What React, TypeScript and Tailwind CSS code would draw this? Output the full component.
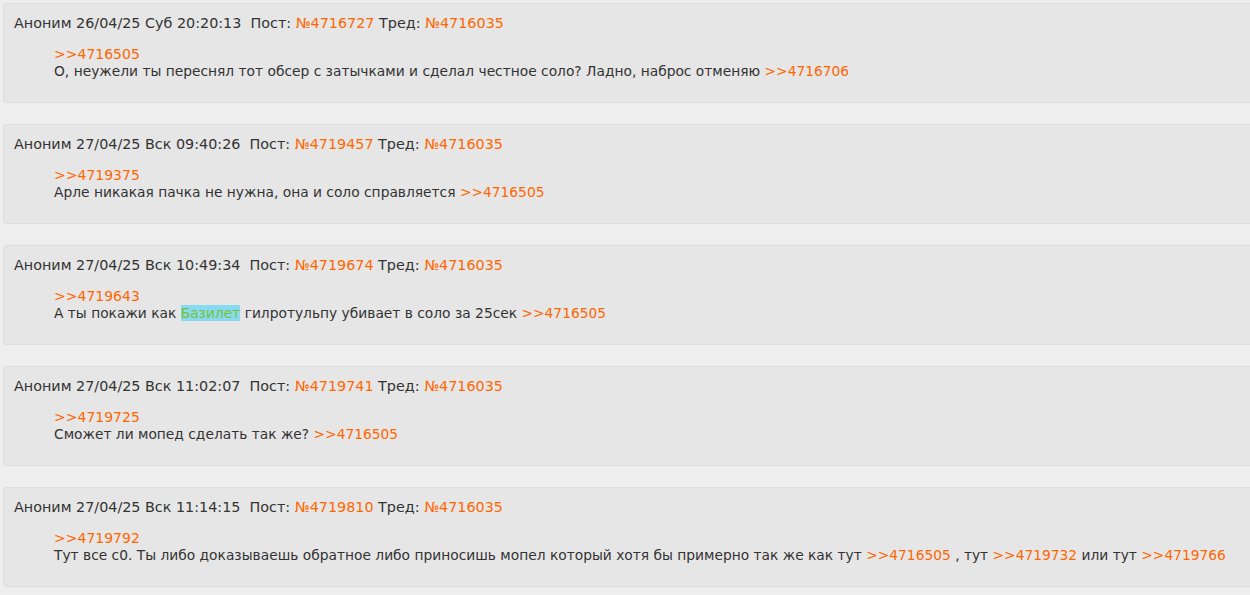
import React from "react";

type Part = { t: string; k?: "link" | "hl" };

const posts: { date: string; num: string; reply: string; body: Part[] }[] = [
  {
    date: "26/04/25 Суб 20:20:13",
    num: "4716727",
    reply: "4716505",
    body: [
      { t: "О, неужели ты переснял тот обсер с затычками и сделал честное соло? Ладно, наброс отменяю " },
      { t: ">>4716706", k: "link" },
    ],
  },
  {
    date: "27/04/25 Вск 09:40:26",
    num: "4719457",
    reply: "4719375",
    body: [
      { t: "Арле никакая пачка не нужна, она и соло справляется " },
      { t: ">>4716505", k: "link" },
    ],
  },
  {
    date: "27/04/25 Вск 10:49:34",
    num: "4719674",
    reply: "4719643",
    body: [
      { t: "А ты покажи как " },
      { t: "Базилет", k: "hl" },
      { t: " гилротульпу убивает в соло за 25сек " },
      { t: ">>4716505", k: "link" },
    ],
  },
  {
    date: "27/04/25 Вск 11:02:07",
    num: "4719741",
    reply: "4719725",
    body: [
      { t: "Сможет ли мопед сделать так же? " },
      { t: ">>4716505", k: "link" },
    ],
  },
  {
    date: "27/04/25 Вск 11:14:15",
    num: "4719810",
    reply: "4719792",
    body: [
      { t: "Тут все с0. Ты либо доказываешь обратное либо приносишь мопел который хотя бы примерно так же как тут " },
      { t: ">>4716505", k: "link" },
      { t: " , тут " },
      { t: ">>4719732", k: "link" },
      { t: " или тут " },
      { t: ">>4719766", k: "link" },
    ],
  },
];

export default function App() {
  return (
    <div
      className="min-h-[595px] bg-[#eeeeee] pt-[3px] pl-[3px] overflow-hidden text-[#333333] text-[14px] leading-[17px]"
      style={{ fontFamily: '"DejaVu Sans", Verdana, sans-serif' }}
    >
      <div className="flex flex-col gap-[21px] w-[1260px]">
        {posts.map((p) => (
          <div
            key={p.num}
            className="h-[100px] bg-[#e6e6e6] border border-[#dddddd] rounded-[3px] pt-[11px] pl-[10px]"
          >
            <div className="whitespace-pre text-[14.35px]">
              Аноним {p.date}  Пост: <span className="text-[#ff6600]">№{p.num}</span> Тред:{" "}
              <span className="text-[#ff6600]">№4716035</span>
            </div>
            <div className="pl-[40px] mt-[14px]">
              <div className="text-[#ff6600]">&gt;&gt;{p.reply}</div>
              <div className="whitespace-pre text-[13.8px]">
                {p.body.map((b, i) =>
                  b.k === "link" ? (
                    <span key={i} className="text-[#ff6600]">{b.t}</span>
                  ) : b.k === "hl" ? (
                    <span key={i} className="bg-[#87daf2] text-[#7ac231]">{b.t}</span>
                  ) : (
                    <span key={i}>{b.t}</span>
                  )
                )}
              </div>
            </div>
          </div>
        ))}
      </div>
    </div>
  );
}
